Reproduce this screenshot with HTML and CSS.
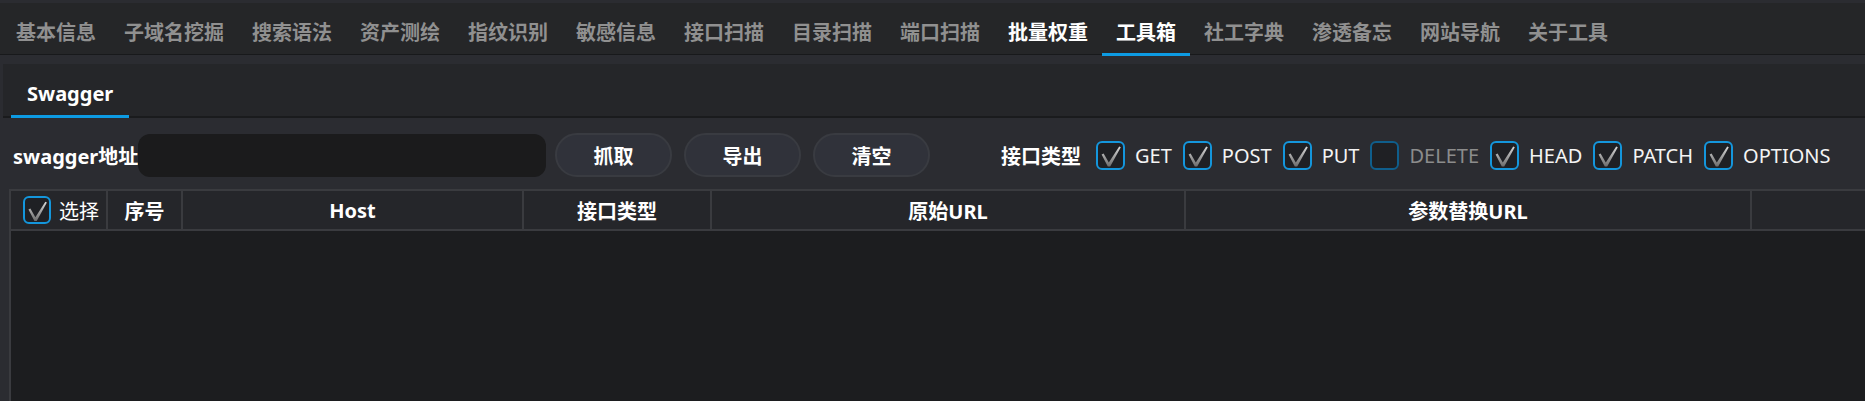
FILE: index.html
```html
<!DOCTYPE html>
<html lang="zh-CN">
<head>
<meta charset="utf-8">
<title>工具箱 - Swagger</title>
<link rel="stylesheet" href="styles.css">
</head>
<body>
<svg class="defs" width="0" height="0" aria-hidden="true">
  <defs>
    <linearGradient id="tickGrad" x1="0" y1="0" x2="0" y2="1">
      <stop offset="0" stop-color="#d8d8d8"/>
      <stop offset="1" stop-color="#6c6c6c"/>
    </linearGradient>
    <symbol id="tick" viewBox="0 0 25 25">
      <path d="M3.6 11.4 L5.6 10.4 L10.8 19.6 L21.2 3.4 L22.8 4.2 L12.2 23.4 L9.8 23.4 Z" fill="url(#tickGrad)"/>
    </symbol>
  </defs>
</svg>
<div class="app">
  <nav class="main-tabs">
    <div class="tab">基本信息</div>
    <div class="tab">子域名挖掘</div>
    <div class="tab">搜索语法</div>
    <div class="tab">资产测绘</div>
    <div class="tab">指纹识别</div>
    <div class="tab">敏感信息</div>
    <div class="tab">接口扫描</div>
    <div class="tab">目录扫描</div>
    <div class="tab">端口扫描</div>
    <div class="tab tab-hover">批量权重</div>
    <div class="tab tab-active">工具箱</div>
    <div class="tab">社工字典</div>
    <div class="tab">渗透备忘</div>
    <div class="tab">网站导航</div>
    <div class="tab">关于工具</div>
  </nav>

  <section class="panel">
    <div class="sub-tabs">
      <div class="subtab subtab-active">Swagger</div>
    </div>

    <div class="toolbar">
      <span class="field-label">swagger地址</span>
      <div class="url-input"></div>
      <button class="btn">抓取</button>
      <button class="btn">导出</button>
      <button class="btn btn-last">清空</button>

      <div class="methods">
        <span class="methods-label">接口类型</span>
        <label class="cb"><span class="box box-on"><svg class="tick"><use href="#tick"/></svg></span><span class="cb-text">GET</span></label>
        <label class="cb"><span class="box box-on"><svg class="tick"><use href="#tick"/></svg></span><span class="cb-text">POST</span></label>
        <label class="cb"><span class="box box-on"><svg class="tick"><use href="#tick"/></svg></span><span class="cb-text">PUT</span></label>
        <label class="cb cb-off"><span class="box"></span><span class="cb-text">DELETE</span></label>
        <label class="cb"><span class="box box-on"><svg class="tick"><use href="#tick"/></svg></span><span class="cb-text">HEAD</span></label>
        <label class="cb"><span class="box box-on"><svg class="tick"><use href="#tick"/></svg></span><span class="cb-text">PATCH</span></label>
        <label class="cb"><span class="box box-on"><svg class="tick"><use href="#tick"/></svg></span><span class="cb-text">OPTIONS</span></label>
      </div>
    </div>

    <div class="grid">
      <div class="thead">
        <div class="th th-select"><span class="box box-on box-small"><svg class="tick"><use href="#tick"/></svg></span><span class="select-text">选择</span></div>
        <div class="th">序号</div>
        <div class="th">Host</div>
        <div class="th">接口类型</div>
        <div class="th">原始URL</div>
        <div class="th">参数替换URL</div>
        <div class="th th-last"></div>
      </div>
      <div class="tbody"></div>
    </div>
  </section>
</div>
</body>
</html>
```

FILE: styles.css
```css
html, body {
  margin: 0;
  height: 100%;
}

body {
  background: #2b2c31;
  font-family: "Noto Sans", "Noto Sans CJK SC", sans-serif;
  overflow: hidden;
}

.defs {
  position: absolute;
  width: 0;
  height: 0;
}

.app {
  height: 401px;
  box-sizing: border-box;
  padding-top: 3px;
  display: flex;
  flex-direction: column;
}

/* ---------- main tab bar ---------- */
.main-tabs {
  display: flex;
  height: 51px;
  padding-left: 2px;
  background: #252628;
  border-bottom: 1px solid #18191b;
  flex: none;
}

.tab {
  position: relative;
  padding: 17px 14px 0;
  font-size: 20px;
  line-height: 26px;
  font-weight: 700;
  color: #909090;
  white-space: nowrap;
}

.tab-hover,
.tab-active {
  color: #ffffff;
}

.tab-active::after {
  content: "";
  position: absolute;
  left: 0;
  right: 0;
  bottom: -2px;
  height: 3px;
  background: #0d9be3;
}

/* ---------- inner panel ---------- */
.panel {
  flex: 1;
  margin: 9px 0 0 3px;
  display: flex;
  flex-direction: column;
  min-height: 0;
}

.sub-tabs {
  display: flex;
  height: 52px;
  padding-left: 8px;
  background: #252629;
  border-bottom: 2px solid #1a1b1d;
  flex: none;
}

.subtab {
  position: relative;
  padding: 17px 16px 0;
  font-size: 20px;
  line-height: 26px;
  font-weight: 700;
  color: #ffffff;
}

.subtab-active::after {
  content: "";
  position: absolute;
  left: 0;
  right: 0;
  bottom: -2px;
  height: 3px;
  background: #0d9be3;
}

/* ---------- toolbar ---------- */
.toolbar {
  display: flex;
  align-items: center;
  height: 44px;
  padding: 15px 0 12px 10px;
  flex: none;
}

.field-label {
  width: 125px;
  flex: none;
  font-size: 20px;
  font-weight: 700;
  color: #ffffff;
  white-space: nowrap;
}

.url-input {
  width: 408px;
  height: 43px;
  flex: none;
  border-radius: 12px;
  background: #1b1b1c;
  margin-right: 9px;
}

.btn {
  width: 117px;
  height: 44px;
  flex: none;
  margin: 0 12px 0 0;
  padding: 0;
  border: 2px solid #393b41;
  border-radius: 22px;
  background: #30323a;
  color: #ffffff;
  font-family: inherit;
  font-size: 20px;
  font-weight: 700;
}

.btn-last {
  margin-right: 0;
}

.methods {
  display: flex;
  align-items: center;
  margin-left: 71px;
}

.methods-label {
  font-size: 20px;
  font-weight: 700;
  color: #ffffff;
  margin-right: 15px;
  white-space: nowrap;
}

.cb {
  display: flex;
  align-items: center;
  margin-right: 11px;
}

.cb-text {
  margin-left: 10px;
  font-size: 20px;
  color: #f4f4f4;
  white-space: nowrap;
}

.cb-off .cb-text {
  color: #8c8c8c;
}

.box {
  width: 29px;
  height: 29px;
  box-sizing: border-box;
  border: 2px solid #0f5e8c;
  border-radius: 6px;
  background: #1f2024;
  display: flex;
  align-items: center;
  justify-content: center;
  flex: none;
}

.box-on {
  border-color: #1496dc;
}

.box-small {
  width: 28px;
  height: 28px;
}

.tick {
  width: 25px;
  height: 25px;
}

/* ---------- data grid ---------- */
.grid {
  flex: 1;
  margin-left: 6px;
  border-left: 2px solid #3a3b3f;
  border-top: 2px solid #3a3b3f;
  display: flex;
  flex-direction: column;
  min-height: 0;
}

.thead {
  display: grid;
  grid-template-columns: 97px 75px 341px 188px 474px 566px 1fr;
  height: 38px;
  background: #25262a;
  border-bottom: 2px solid #3a3b3f;
  flex: none;
}

.th {
  display: flex;
  align-items: center;
  justify-content: center;
  border-right: 2px solid #3a3b3f;
  font-size: 20px;
  font-weight: 700;
  color: #ffffff;
  white-space: nowrap;
}

.th-select {
  justify-content: flex-start;
  padding-left: 12px;
}

.th-last {
  border-right: none;
}

.select-text {
  margin-left: 8px;
  font-weight: 400;
}

.tbody {
  flex: 1;
  background: #1c1d1f;
}
```
